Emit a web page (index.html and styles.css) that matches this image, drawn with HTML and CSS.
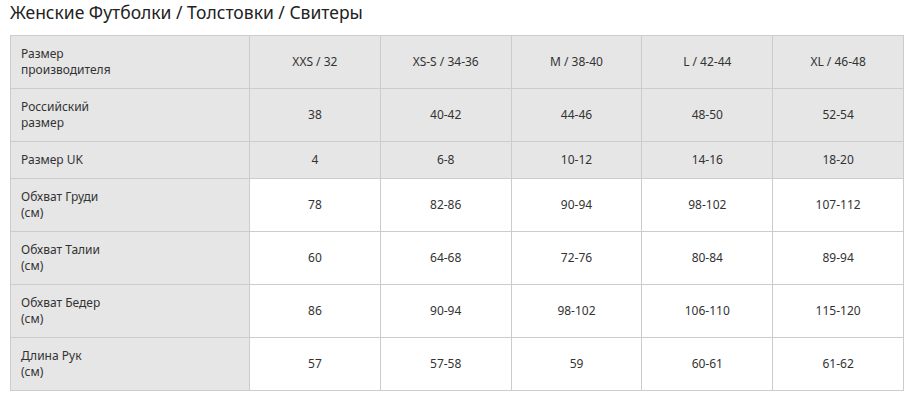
FILE: index.html
```html
<!DOCTYPE html>
<html lang="ru">
<head>
<meta charset="utf-8">
<title>Размеры</title>
<link rel="stylesheet" href="styles.css">
</head>
<body>
<h2 class="title">Женские Футболки / Толстовки / Свитеры</h2>
<table class="sizes">
  <tr class="head">
    <th>Размер<br>производителя</th>
    <td>XXS / 32</td><td>XS-S / 34-36</td><td>M / 38-40</td><td>L / 42-44</td><td>XL / 46-48</td>
  </tr>
  <tr class="head">
    <th>Российский<br>размер</th>
    <td>38</td><td>40-42</td><td>44-46</td><td>48-50</td><td>52-54</td>
  </tr>
  <tr class="head">
    <th>Размер UK</th>
    <td>4</td><td>6-8</td><td>10-12</td><td>14-16</td><td>18-20</td>
  </tr>
  <tr>
    <th>Обхват Груди<br>(см)</th>
    <td>78</td><td>82-86</td><td>90-94</td><td>98-102</td><td>107-112</td>
  </tr>
  <tr>
    <th>Обхват Талии<br>(см)</th>
    <td>60</td><td>64-68</td><td>72-76</td><td>80-84</td><td>89-94</td>
  </tr>
  <tr>
    <th>Обхват Бедер<br>(см)</th>
    <td>86</td><td>90-94</td><td>98-102</td><td>106-110</td><td>115-120</td>
  </tr>
  <tr>
    <th>Длина Рук<br>(см)</th>
    <td>57</td><td>57-58</td><td>59</td><td>60-61</td><td>61-62</td>
  </tr>
</table>
</body>
</html>
```
FILE: styles.css
```css
html, body {
  margin: 0;
  padding: 0;
  background: #ffffff;
}
body {
  padding: 0 10px;
  font-family: "Noto Sans", "Open Sans", sans-serif;
  color: #333333;
}
.title {
  margin: 0;
  padding-top: 1px;
  height: 34px;
  font-size: 17.5px;
  font-weight: 400;
  line-height: 22px;
  color: #222222;
}
.sizes {
  border-collapse: collapse;
  width: 894px;
  table-layout: fixed;
  font-size: 12px;
  line-height: 16px;
}
.sizes th,
.sizes td {
  border: 1px solid #cccccc;
  padding: 10px 10px;
  font-weight: 400;
}
.sizes th {
  width: 218px;
  text-align: left;
  background: #e6e6e6;
}
.sizes td {
  text-align: center;
  background: #ffffff;
}
.sizes .head td {
  background: #e6e6e6;
}
```
